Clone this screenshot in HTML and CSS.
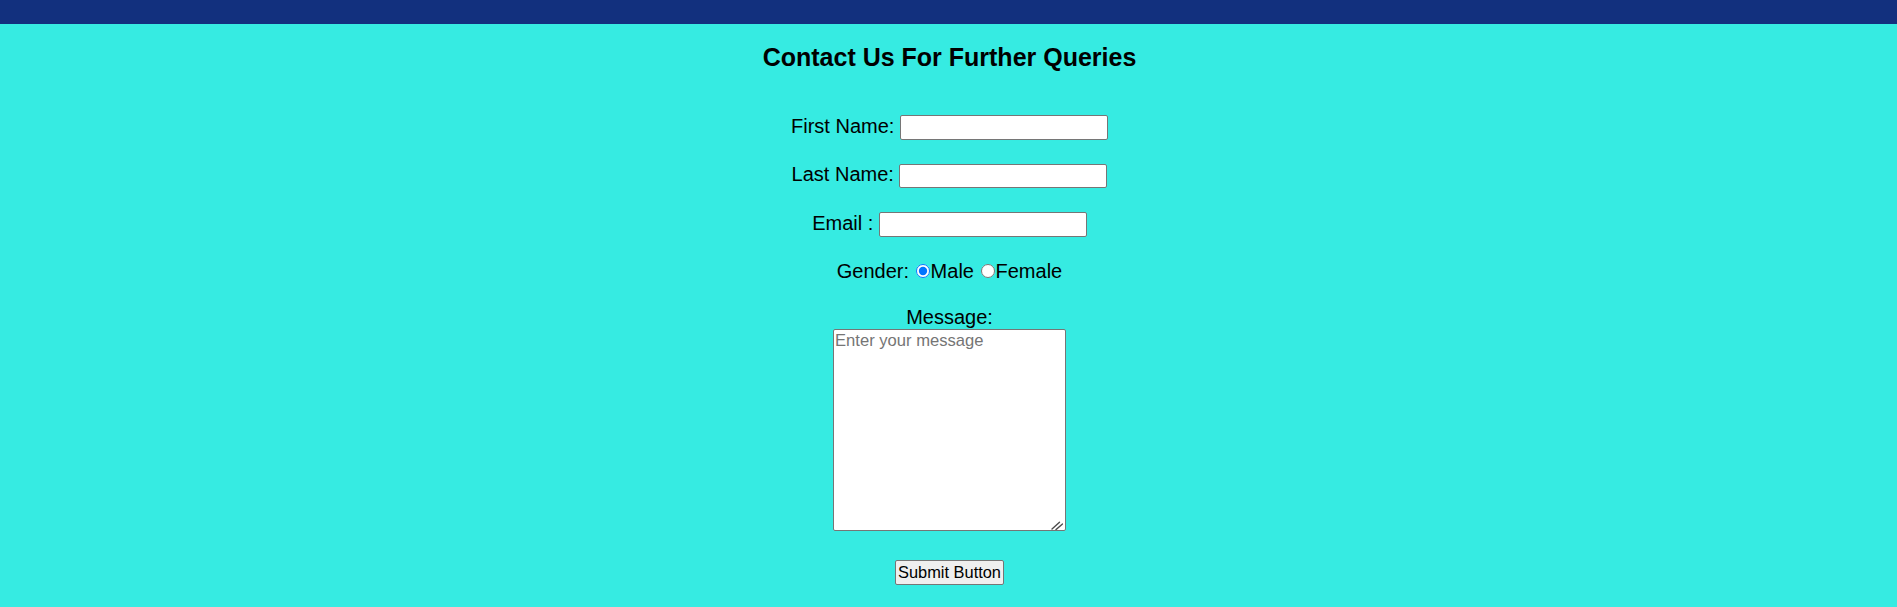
FILE: index.html
```html
<!DOCTYPE html>
<html lang="en">
<head>
<meta charset="utf-8">
<title>Contact Us</title>
<link rel="stylesheet" href="styles.css">
</head>
<body>
<header class="topbar"></header>
<main class="page">
  <h2 class="title">Contact Us For Further Queries</h2>
  <form class="contact">
    <div class="row first"><label for="fname">First Name:</label> <input type="text" id="fname" class="field"></div>
    <div class="row"><label for="lname">Last Name:</label> <input type="text" id="lname" class="field"></div>
    <div class="row"><label for="email">Email :</label> <input type="email" id="email" class="field"></div>
    <div class="row"><span>Gender:</span> <input type="radio" name="gender" id="male" class="radio" checked><label for="male">Male</label> <input type="radio" name="gender" id="female" class="radio"><label for="female">Female</label></div>
    <div class="row message">
      <label for="msg" class="msg-label">Message:</label>
      <div class="msg-wrap">
        <textarea id="msg" class="msg-box" placeholder="Enter your message"></textarea>
        <svg class="grip" width="12" height="9" viewBox="0 0 12 9" aria-hidden="true">
          <line x1="1" y1="8" x2="8.5" y2="1.2" />
          <line x1="5" y1="8.6" x2="11.5" y2="3" />
        </svg>
      </div>
    </div>
    <button type="submit" class="submit">Submit Button</button>
  </form>
</main>
</body>
</html>
```
FILE: styles.css
```css
html, body {
  margin: 0;
  background: #36ebe2;
}

body {
  font-family: "Liberation Sans", Arial, sans-serif;
  color: #000;
}

.topbar {
  height: 24px;
  background: #12307e;
}

.page {
  padding-left: 2px;
}

.title {
  margin: 19px 0 0;
  font-size: 25px;
  line-height: 28px;
  font-weight: bold;
  text-align: center;
}

.contact {
  padding-top: 43.5px;
  text-align: center;
  font-size: 20px;
  line-height: 23px;
}

.row {
  margin-top: 23.3px;
}

.row.first {
  margin-top: 0;
}

.field {
  box-sizing: border-box;
  width: 208px;
  height: 24.4px;
  margin: 0;
  padding: 2px 2px;
  border: 1px solid #767676;
  border-radius: 2px;
  background: #fff;
  font-family: "Liberation Sans", Arial, sans-serif;
  font-size: 16px;
  line-height: normal;
  vertical-align: baseline;
}

.radio {
  width: 14px;
  height: 14px;
  margin: 0 1px 0 1px;
  vertical-align: baseline;
}

.msg-label {
  display: block;
}

.msg-wrap {
  position: relative;
  width: 233px;
  margin: 0 auto;
}

.msg-box {
  display: block;
  box-sizing: border-box;
  width: 233px;
  height: 202px;
  margin: 0;
  padding: 1px 1px;
  border: 1px solid #767676;
  border-radius: 2px;
  background: #fff;
  font-family: "Liberation Sans", Arial, sans-serif;
  font-size: 16.6px;
  line-height: normal;
  resize: none;
}

.msg-box::placeholder {
  color: #757575;
}

.grip {
  position: absolute;
  right: 3px;
  bottom: 1px;
  stroke: #4d4d4d;
  stroke-width: 1.4;
  stroke-linecap: round;
}

.submit {
  display: block;
  margin: 29px auto 0;
  padding: 2px 2px;
  border: 1px solid #767676;
  border-radius: 2px;
  background: #efefef;
  color: #000;
  font-family: "Liberation Sans", Arial, sans-serif;
  font-size: 16.4px;
  line-height: 18.4px;
}
```
